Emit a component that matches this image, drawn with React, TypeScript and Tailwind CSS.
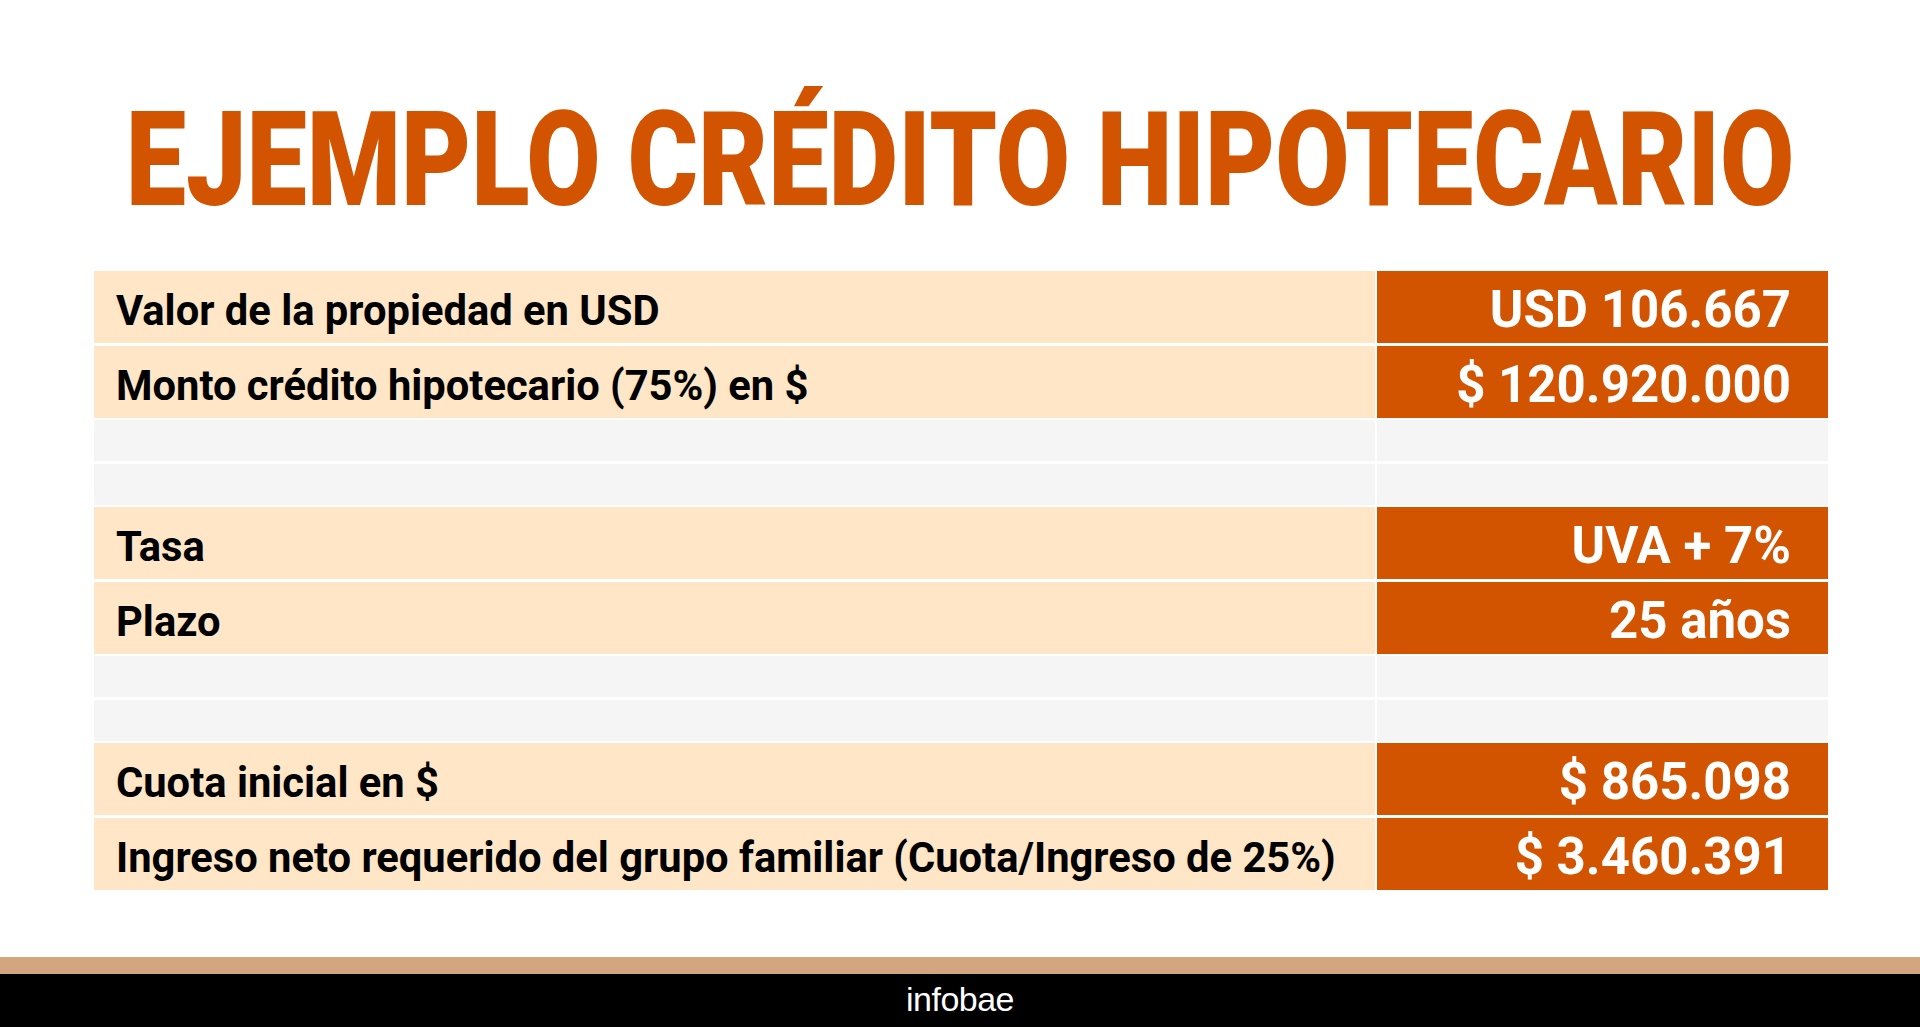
const rows: { label: string; value: string }[][] = [
  [
    { label: 'Valor de la propiedad en USD', value: 'USD 106.667' },
    { label: 'Monto crédito hipotecario (75%) en $', value: '$ 120.920.000' },
  ],
  [
    { label: 'Tasa', value: 'UVA + 7%' },
    { label: 'Plazo', value: '25 años' },
  ],
  [
    { label: 'Cuota inicial en $', value: '$ 865.098' },
    { label: 'Ingreso neto requerido del grupo familiar (Cuota/Ingreso de 25%)', value: '$ 3.460.391' },
  ],
];

function DataRow({ label, value }: { label: string; value: string }) {
  return (
    <div className="flex h-[72px] gap-[2px]">
      <div className="flex flex-1 items-center whitespace-nowrap bg-[#FFE6C7] pl-[22px] pt-[8px] text-[41.7px] font-bold leading-none text-black">
        {label}
      </div>
      <div className="flex w-[451px] items-center justify-end whitespace-nowrap bg-[#D35400] pr-[37px] pt-[5px] text-[51px] font-bold leading-none text-white">
        {value}
      </div>
    </div>
  );
}

function EmptyRow() {
  return (
    <div className="flex h-[41px] gap-[2px]">
      <div className="flex-1 bg-[#F5F5F5]" />
      <div className="w-[451px] bg-[#F5F5F5]" />
    </div>
  );
}

export default function App() {
  return (
    <div className="flex h-[1027px] w-full flex-col bg-white font-['Roboto',sans-serif]">
      {/* Title */}
      <div className="flex justify-center pt-[95px]">
        <h1 className="inline-block whitespace-nowrap text-[131px] font-black leading-none text-[#D35400] [transform:scaleX(0.822)]">
          EJEMPLO CRÉDITO HIPOTECARIO
        </h1>
      </div>

      {/* Table */}
      <div className="ml-[94px] mr-[92px] mt-[45px] flex flex-col gap-[2.5px]">
        {rows.map((group, i) => (
          <div key={i} className="flex flex-col gap-[2.5px]">
            {group.map((r) => (
              <DataRow key={r.label} label={r.label} value={r.value} />
            ))}
            {i < rows.length - 1 && (
              <>
                <EmptyRow />
                <EmptyRow />
              </>
            )}
          </div>
        ))}
      </div>

      <div className="flex-1" />

      {/* Footer */}
      <div className="h-[17px] bg-[#D4A680]" />
      <div className="flex h-[53px] items-center justify-center bg-black pb-[4px]">
        <span className="font-['Liberation_Sans',sans-serif] text-[34px] leading-none tracking-[-0.5px] text-white">infobae</span>
      </div>
    </div>
  );
}
